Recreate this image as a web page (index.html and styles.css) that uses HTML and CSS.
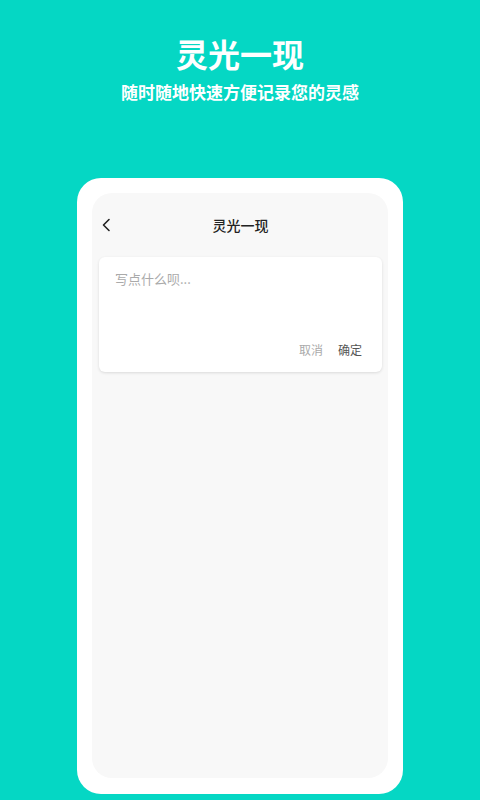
FILE: index.html
```html
<!DOCTYPE html>
<html lang="zh-CN">
<head>
<meta charset="utf-8">
<link rel="stylesheet" href="styles.css">
</head>
<body>
<div class="page">
  <header class="hero">
    <h1 class="hero-title">灵光一现</h1>
    <p class="hero-sub">随时随地快速方便记录您的灵感</p>
  </header>
  <div class="phone">
    <div class="screen">
      <div class="nav">
        <svg class="back" width="10" height="14" viewBox="0 0 10 14"><path d="M8 1.5 L2.5 7 L8 12.5" fill="none" stroke="#222" stroke-width="1.6" stroke-linecap="round" stroke-linejoin="round"/></svg>
        <div class="nav-title">灵光一现</div>
      </div>
      <div class="card">
        <div class="placeholder">写点什么呗...</div>
        <div class="actions">
          <span class="cancel">取消</span>
          <span class="ok">确定</span>
        </div>
      </div>
    </div>
  </div>
</div>
</body>
</html>
```
FILE: styles.css
```css
html, body {
  margin: 0;
  padding: 0;
}
body {
  background: #05d7c4;
  font-family: "Noto Sans CJK SC", "Noto Sans", sans-serif;
  width: 480px;
  height: 800px;
  overflow: hidden;
}
.page {
  display: flex;
  flex-direction: column;
  align-items: center;
}
.hero {
  text-align: center;
  color: #fff;
  padding-top: 31px;
}
.hero-title {
  margin: 0;
  font-size: 32px;
  line-height: 44px;
  font-weight: 700;
}
.hero-sub {
  margin: 5px 0 0;
  font-size: 17px;
  line-height: 24px;
  font-weight: 700;
}
.phone {
  margin-top: 74px;
  width: 326px;
  height: 616px;
  box-sizing: border-box;
  background: #fff;
  border-radius: 24px;
  padding: 15px 15px 16px;
  display: flex;
}
.screen {
  flex: 1;
  background: #f8f8f8;
  border-radius: 20px;
  display: flex;
  flex-direction: column;
  padding: 0 6px 0 7px;
}
.nav {
  height: 64px;
  display: flex;
  align-items: center;
  justify-content: center;
  position: relative;
}
.back {
  position: absolute;
  left: 2px;
  top: 25px;
}
.nav-title {
  font-size: 14px;
  font-weight: 500;
  color: #222;
}
.card {
  height: 115px;
  box-sizing: border-box;
  background: #fff;
  border-radius: 6px;
  box-shadow: 0 1px 3px rgba(0,0,0,0.12);
  padding: 12px 20px 13px 16px;
  display: flex;
  flex-direction: column;
  justify-content: space-between;
}
.placeholder {
  font-size: 13px;
  line-height: 20px;
  color: #aaa;
}
.actions {
  display: flex;
  justify-content: flex-end;
  gap: 15px;
  font-size: 12px;
  line-height: 18px;
}
.cancel {
  color: #aaa;
}
.ok {
  color: #555;
}
```
